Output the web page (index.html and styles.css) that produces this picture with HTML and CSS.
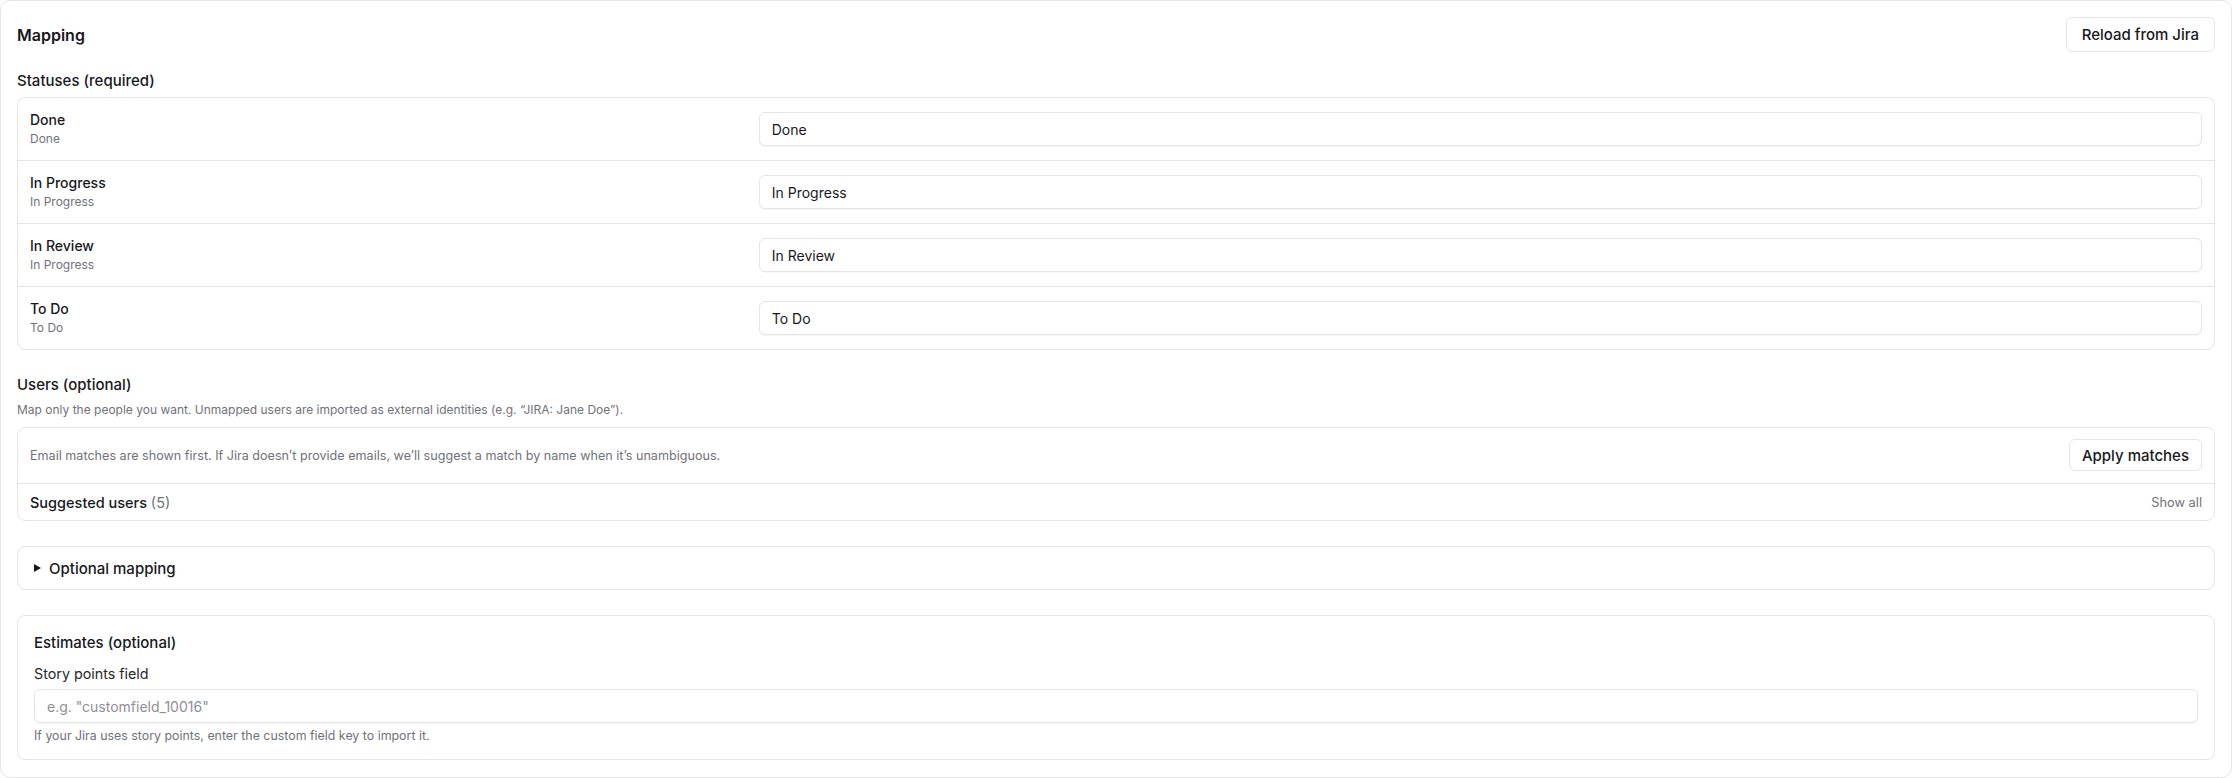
FILE: index.html
```html
<!DOCTYPE html>
<html lang="en">
<head>
<meta charset="utf-8">
<title>Mapping</title>
<link rel="stylesheet" href="styles.css">
</head>
<body>
<div class="card">
  <div class="header">
    <h2 class="title">Mapping</h2>
    <button class="btn btn-lg" type="button">Reload from Jira</button>
  </div>

  <h3 class="section-title statuses-title">Statuses (required)</h3>
  <div class="table">
    <div class="row">
      <div class="label"><div class="name">Done</div><div class="sub">Done</div></div>
      <input class="input" type="text" value="Done">
    </div>
    <div class="row">
      <div class="label"><div class="name">In Progress</div><div class="sub">In Progress</div></div>
      <input class="input" type="text" value="In Progress">
    </div>
    <div class="row">
      <div class="label"><div class="name">In Review</div><div class="sub">In Progress</div></div>
      <input class="input" type="text" value="In Review">
    </div>
    <div class="row">
      <div class="label"><div class="name">To Do</div><div class="sub">To Do</div></div>
      <input class="input" type="text" value="To Do">
    </div>
  </div>

  <h3 class="section-title users-title">Users (optional)</h3>
  <p class="desc">Map only the people you want. Unmapped users are imported as external identities (e.g. “JIRA: Jane Doe”).</p>
  <div class="users-box">
    <div class="users-top">
      <span class="hint">Email matches are shown first. If Jira doesn’t provide emails, we’ll suggest a match by name when it’s unambiguous.</span>
      <button class="btn btn-sm" type="button">Apply matches</button>
    </div>
    <div class="users-bottom">
      <span class="suggested">Suggested users <span class="count">(5)</span></span>
      <span class="show-all">Show all</span>
    </div>
  </div>

  <details class="optional">
    <summary class="optional-summary">Optional mapping</summary>
  </details>

  <div class="estimates">
    <h3 class="section-title">Estimates (optional)</h3>
    <label class="field-label" for="sp">Story points field</label>
    <input class="input" id="sp" type="text" placeholder="e.g. &quot;customfield_10016&quot;">
    <p class="help">If your Jira uses story points, enter the custom field key to import it.</p>
  </div>
</div>
</body>
</html>
```
FILE: styles.css
```css
* { box-sizing: border-box; }

html, body {
  margin: 0;
  padding: 0;
  background: #ffffff;
}

body {
  font-family: Inter, "Noto Sans", "Liberation Sans", sans-serif;
  color: #18181b;
  width: 2232px;
  height: 778px;
  overflow: hidden;
}

.card {
  width: 2232px;
  height: 778px;
  border: 1px solid #e4e4e7;
  border-radius: 10px;
  padding: 16px;
  display: flex;
  flex-direction: column;
}

.header {
  display: flex;
  align-items: center;
  justify-content: space-between;
  height: 35px;
}

.title {
  margin: 0;
  font-size: 16px;
  font-weight: 600;
  line-height: 20px;
}

.btn {
  font-family: inherit;
  background: #ffffff;
  color: #18181b;
  border: 1px solid #e4e4e7;
  border-radius: 6px;
  font-size: 15px;
  font-weight: 500;
  white-space: nowrap;
  cursor: pointer;
}

.btn-lg { height: 35px; padding: 0 15px; }
.btn-sm { height: 32px; padding: 0 12px; }

.section-title {
  margin: 0;
  font-size: 15px;
  font-weight: 500;
  line-height: 20px;
}

.statuses-title { margin-top: 19px; margin-bottom: 6px; }

.table {
  border: 1px solid #e4e4e7;
  border-radius: 8px;
}

.row {
  display: grid;
  grid-template-columns: 33% 1fr;
  column-gap: 12px;
  align-items: center;
  padding: 14px 12px;
  border-top: 1px solid #e4e4e7;
}

.row:first-child { border-top: none; }

.label {
  display: flex;
  flex-direction: column;
  justify-content: center;
  height: 34px;
}

.name {
  font-size: 14px;
  font-weight: 500;
  line-height: 18px;
}

.sub {
  margin-top: 2px;
  font-size: 12px;
  color: #71717a;
  line-height: 16px;
}

.input {
  font-family: inherit;
  width: 100%;
  height: 34px;
  border: 1px solid #e4e4e7;
  border-radius: 6px;
  padding: 0 12px;
  font-size: 14px;
  color: #18181b;
  background: #ffffff;
  box-shadow: 0 1px 1px rgba(0, 0, 0, 0.03);
}

.input::placeholder { color: #8e8e96; }

.users-title { margin-top: 25px; }

.desc {
  margin: 6px 0 8px;
  font-size: 12px;
  line-height: 18px;
  color: #71717a;
}

.users-box {
  border: 1px solid #e4e4e7;
  border-radius: 8px;
}

.users-top {
  display: flex;
  align-items: center;
  justify-content: space-between;
  padding: 11px 12px 12px;
  border-bottom: 1px solid #e4e4e7;
}

.hint {
  font-size: 12.6px;
  color: #71717a;
}

.users-bottom {
  display: flex;
  align-items: center;
  justify-content: space-between;
  height: 36px;
  padding: 0 12px;
}

.suggested {
  font-size: 14.5px;
  font-weight: 500;
}

.count {
  font-weight: 400;
  color: #71717a;
}

.show-all {
  font-size: 12.8px;
  color: #71717a;
}

.optional {
  margin-top: 25px;
  border: 1px solid #e4e4e7;
  border-radius: 8px;
}

.optional-summary {
  height: 42px;
  display: flex;
  align-items: center;
  padding: 0 16px;
  font-size: 15px;
  font-weight: 500;
  list-style: none;
  cursor: pointer;
}

.optional-summary::-webkit-details-marker { display: none; }

.optional-summary::before {
  content: "";
  width: 0;
  height: 0;
  border-top: 4.5px solid transparent;
  border-bottom: 4.5px solid transparent;
  border-left: 7px solid #18181b;
  margin-right: 8px;
}

.estimates {
  margin-top: 25px;
  border: 1px solid #e4e4e7;
  border-radius: 8px;
  padding: 17px 16px 15px;
  display: flex;
  flex-direction: column;
}

.field-label {
  margin-top: 11px;
  font-size: 14.3px;
  line-height: 20px;
  color: #27272a;
}

.estimates .input { margin-top: 5px; }

.help {
  margin: 5px 0 0;
  font-size: 12.4px;
  line-height: 16px;
  color: #71717a;
}
```
